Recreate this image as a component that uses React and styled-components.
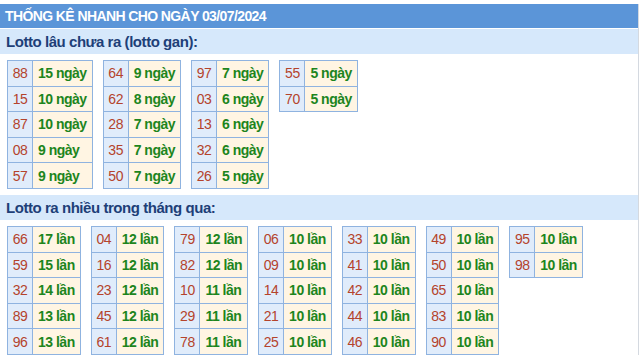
import React from "react";
import styled, { createGlobalStyle } from "styled-components";

const Global = createGlobalStyle`
  html, body { margin: 0; padding: 0; background: #ffffff; }
  body { font-family: "Liberation Sans", Arial, sans-serif; }
`;

const Page = styled.div`
  width: 639px;
  margin-top: 4px;
  border-right: 1px solid #d4d9e0;
  box-sizing: border-box;
`;

const Header = styled.div`
  height: 24px;
  background: #5b95d8;
  color: #ffffff;
  font-weight: bold;
  font-size: 14px;
  line-height: 24px;
  padding-left: 5px;
  letter-spacing: -0.6px;
`;

const SubHeader = styled.div`
  height: 25px;
  margin-top: ${(p) => p.$top || 0}px;
  background: #d6e8fb;
  color: #1e3f78;
  font-size: 15px;
  font-weight: bold;
  letter-spacing: -0.45px;
  line-height: 25px;
  padding-left: 6px;
`;

const Section = styled.div`
  display: flex;
  align-items: flex-start;
  gap: 10px;
  padding: 6px 0 0 7px;
`;

const Table = styled.div`
  display: grid;
  grid-template-columns: auto auto;
  border-top: 1px solid #8fb3e0;
  border-left: 1px solid #8fb3e0;
`;

const Cell = styled.div`
  height: 24.6px;
  display: flex;
  align-items: center;
  border-right: 1px solid #8fb3e0;
  border-bottom: 1px solid #8fb3e0;
  font-size: 14px;
  letter-spacing: -0.5px;
  box-sizing: content-box;
`;

const Num = styled(Cell)`
  background: #e0ecfb;
  color: #b4432c;
  justify-content: center;
  width: 24px;
`;

const Val = styled(Cell)`
  background: #fff5e3;
  color: #1d851d;
  font-weight: bold;
  padding: 0 5px 0 5px;
`;

const gan = [
  [["88", "15"], ["15", "10"], ["87", "10"], ["08", "9"], ["57", "9"]],
  [["64", "9"], ["62", "8"], ["28", "7"], ["35", "7"], ["50", "7"]],
  [["97", "7"], ["03", "6"], ["13", "6"], ["32", "6"], ["26", "5"]],
  [["55", "5"], ["70", "5"]],
];

const nhieu = [
  [["66", "17"], ["59", "15"], ["32", "14"], ["89", "13"], ["96", "13"]],
  [["04", "12"], ["16", "12"], ["23", "12"], ["45", "12"], ["61", "12"]],
  [["79", "12"], ["82", "12"], ["10", "11"], ["29", "11"], ["78", "11"]],
  [["06", "10"], ["09", "10"], ["14", "10"], ["21", "10"], ["25", "10"]],
  [["33", "10"], ["41", "10"], ["42", "10"], ["44", "10"], ["46", "10"]],
  [["49", "10"], ["50", "10"], ["65", "10"], ["83", "10"], ["90", "10"]],
  [["95", "10"], ["98", "10"]],
];

function Group({ data, unit }) {
  return (
    <Section>
      {data.map((col, i) => (
        <Table key={i}>
          {col.map(([n, v]) => (
            <React.Fragment key={n}>
              <Num>{n}</Num>
              <Val>
                {v} {unit}
              </Val>
            </React.Fragment>
          ))}
        </Table>
      ))}
    </Section>
  );
}

export default function App() {
  return (
    <>
      <Global />
      <Page>
        <Header>THỐNG KÊ NHANH CHO NGÀY 03/07/2024</Header>
        <SubHeader $top={1}>Lotto lâu chưa ra (lotto gan):</SubHeader>
        <Group data={gan} unit="ngày" />
        <SubHeader $top={6}>Lotto ra nhiều trong tháng qua:</SubHeader>
        <Group data={nhieu} unit="lần" />
      </Page>
    </>
  );
}
